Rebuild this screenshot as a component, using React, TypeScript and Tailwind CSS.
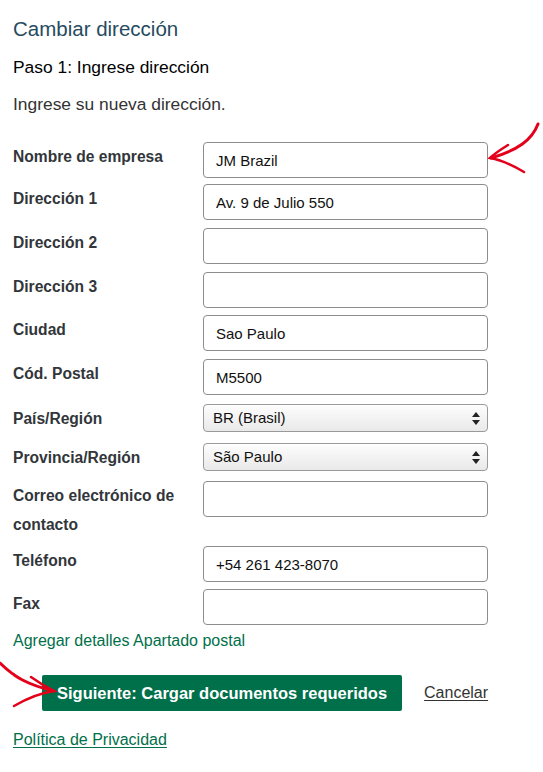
import { ReactNode } from "react";

const font = { fontFamily: '"Liberation Sans", Arial, sans-serif' };

// fila de formulario: etiqueta a la izquierda, campo a la derecha
function Row({ label, children, select }: { label: string; children: ReactNode; select?: boolean }) {
    return (
        <div className={`flex ${select ? "h-[30px] pt-[1px]" : ""}`}>
            <div className="w-[190px] shrink-0 text-[15.6px] font-bold leading-[29px] text-[#32363a] pr-2">{label}</div>
            <div className="w-[285px]">{children}</div>
        </div>
    );
}

function TextInput({ value }: { value?: string }) {
    return (
        <input
            type="text"
            defaultValue={value}
            className="w-full h-[36px] rounded-[4px] border border-[#8d8d8d] bg-white px-3 text-[15px] text-[#111] outline-none"
            style={font}
        />
    );
}

function SelectBox({ value }: { value: string }) {
    return (
        <div className="relative h-[28px] w-full rounded-[4px] border border-[#9a9a9a] bg-gradient-to-b from-[#fdfdfd] via-[#f3f3f3] to-[#e9e9e9] shadow-[inset_0_1px_0_#fff]">
            <div className="pl-[9px] text-[15px] leading-[26px] text-[#111]">{value}</div>
            <svg className="absolute right-[7px] top-[7px]" width="8" height="13" viewBox="0 0 8 13">
                <path d="M4 0 L8 5 L0 5 Z" fill="#222" />
                <path d="M0 8 L8 8 L4 13 Z" fill="#222" />
            </svg>
        </div>
    );
}

export default function App() {
    return (
        <main className="relative min-h-[772px] w-[543px] bg-white pl-[13px] pt-[16px]" style={font}>
            <h1 className="text-[20.5px] leading-[26px] text-[#264b5e]">Cambiar dirección</h1>
            <h2 className="mt-[13px] text-[17.4px] leading-[24px] text-black">Paso 1: Ingrese dirección</h2>
            <p className="mt-[13px] text-[17.4px] leading-[24px] text-[#333]">Ingrese su nueva dirección.</p>

            <div className="mt-[26px] flex flex-col gap-[8px]">
                <div className="-mb-[2px]">
                    <Row label="Nombre de empresa"><TextInput value="JM Brazil" /></Row>
                </div>
                <Row label="Dirección 1"><TextInput value="Av. 9 de Julio 550" /></Row>
                <Row label="Dirección 2"><TextInput /></Row>
                <div className="-mb-[1px]">
                    <Row label="Dirección 3"><TextInput /></Row>
                </div>
                <Row label="Ciudad"><TextInput value="Sao Paulo" /></Row>
                <Row label="Cód. Postal"><TextInput value="M5500" /></Row>
                <div className="mb-[1px]">
                    <Row label="País/Región" select><SelectBox value="BR (Brasil)" /></Row>
                </div>
                <div className="mb-[1px]">
                    <Row label="Provincia/Región" select><SelectBox value="São Paulo" /></Row>
                </div>
                <div className="-mb-[1px]">
                    <Row label="Correo electrónico de contacto"><TextInput /></Row>
                </div>
                <div className="-mb-[1px]">
                    <Row label="Teléfono"><TextInput value="+54 261 423-8070" /></Row>
                </div>
                <Row label="Fax"><TextInput /></Row>
            </div>

            <a className="mt-[6px] block text-[16px] leading-[20px] text-[#00704a]">Agregar detalles Apartado postal</a>

            <div className="mt-[24px] flex items-center pl-[29px]">
                <button className="h-[36px] rounded-[2px] bg-[#00704a] px-[15px] text-[16.5px] font-bold text-white" style={font}>
                    Siguiente: Cargar documentos requeridos
                </button>
                <a className="ml-[22px] text-[16px] text-[#333] underline underline-offset-2">Cancelar</a>
            </div>

            <a className="mt-[19px] block text-[16px] leading-[20px] text-[#00704a] underline underline-offset-2">Política de Privacidad</a>

            {/* flechas rojas dibujadas a mano */}
            <svg className="absolute left-[480px] top-[118px]" width="63" height="62" viewBox="0 0 63 62">
                <path d="M58 6 C52 22 38 32 11 40" stroke="#e4001b" strokeWidth="3" fill="none" strokeLinecap="round" />
                <path d="M28 27 C20 32 14 36 10 40 C22 42 34 48 44 54" stroke="#e4001b" strokeWidth="2.5" fill="none" strokeLinecap="round" />
            </svg>
            <svg className="absolute left-0 top-[655px]" width="60" height="60" viewBox="0 0 60 60">
                <path d="M0 8 C14 22 28 30 54 36" stroke="#e4001b" strokeWidth="3" fill="none" strokeLinecap="round" />
                <path d="M31 22 C38 27 46 32 54 36 C40 38 26 44 14 51" stroke="#e4001b" strokeWidth="2.5" fill="none" strokeLinecap="round" />
            </svg>
        </main>
    );
}
